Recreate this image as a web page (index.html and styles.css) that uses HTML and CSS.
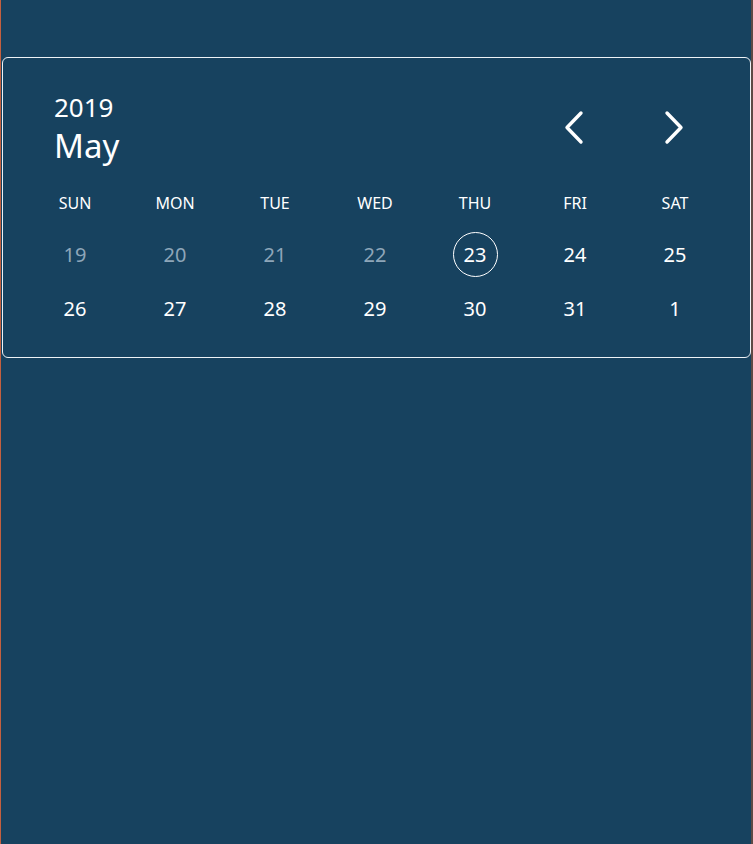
FILE: index.html
```html
<!DOCTYPE html>
<html>
<head>
<meta charset="utf-8">
<link rel="stylesheet" href="styles.css">
</head>
<body>
<div class="page">
  <div class="card">
    <div class="header">
      <div class="title">
        <div class="year">2019</div>
        <div class="month">May</div>
      </div>
      <div class="nav">
        <button class="navbtn" aria-label="Previous">
          <svg width="24" height="36" viewBox="0 0 24 36"><path d="M19 3 L5 17.5 L19 32" fill="none" stroke="#fff" stroke-width="3.4" stroke-linecap="round" stroke-linejoin="round"/></svg>
        </button>
        <button class="navbtn" aria-label="Next">
          <svg width="24" height="36" viewBox="0 0 24 36"><path d="M5 3 L19 17.5 L5 32" fill="none" stroke="#fff" stroke-width="3.4" stroke-linecap="round" stroke-linejoin="round"/></svg>
        </button>
      </div>
    </div>
    <div class="grid">
      <div class="dow">SUN</div><div class="dow">MON</div><div class="dow">TUE</div><div class="dow">WED</div><div class="dow">THU</div><div class="dow">FRI</div><div class="dow">SAT</div>
      <div class="day past">19</div><div class="day past">20</div><div class="day past">21</div><div class="day past">22</div><div class="day"><span class="today">23</span></div><div class="day">24</div><div class="day">25</div>
      <div class="day">26</div><div class="day">27</div><div class="day">28</div><div class="day">29</div><div class="day">30</div><div class="day">31</div><div class="day">1</div>
    </div>
  </div>
</div>
</body>
</html>
```
FILE: styles.css
```css
html, body {
  margin: 0;
  padding: 0;
  height: 100%;
  background: #17425f;
}
body {
  font-family: "Noto Sans", "Open Sans", sans-serif;
  color: #ffffff;
}
.page {
  box-sizing: border-box;
  width: 753px;
  height: 844px;
  border-left: 1px solid #c4603f;
  border-right: 2px solid #5e4a45;
  padding: 57px 1px 0 1px;
  background: #17425f;
}
.card {
  box-sizing: border-box;
  width: 749px;
  height: 301px;
  border: 1.5px solid #eef2f6;
  border-radius: 6px;
  padding: 0 24px 0 22px;
}
.header {
  display: flex;
  justify-content: space-between;
  align-items: flex-start;
  padding-top: 32px;
}
.title {
  padding-left: 29px;
}
.year {
  font-size: 26px;
  line-height: 34px;
}
.month {
  font-size: 33px;
  line-height: 40px;
  margin-top: 2px;
}
.nav {
  display: flex;
  gap: 76px;
  padding-top: 20px;
  padding-right: 40px;
}
.navbtn {
  background: none;
  border: none;
  padding: 0;
  width: 24px;
  height: 36px;
  cursor: pointer;
}
.navbtn svg {
  display: block;
}
.grid {
  display: grid;
  grid-template-columns: repeat(7, 100px);
  margin-top: 26px;
}
.dow {
  text-align: center;
  font-size: 16px;
  line-height: 22px;
}
.day {
  display: flex;
  justify-content: center;
  align-items: center;
  height: 54px;
  font-size: 20px;
}
.grid .day:nth-child(-n+14) {
  margin-top: 13px;
}
.past {
  color: #8ea6b9;
}
.today {
  display: flex;
  justify-content: center;
  align-items: center;
  width: 45px;
  height: 45px;
  border: 1px solid #ffffff;
  border-radius: 50%;
  box-sizing: border-box;
}
```
